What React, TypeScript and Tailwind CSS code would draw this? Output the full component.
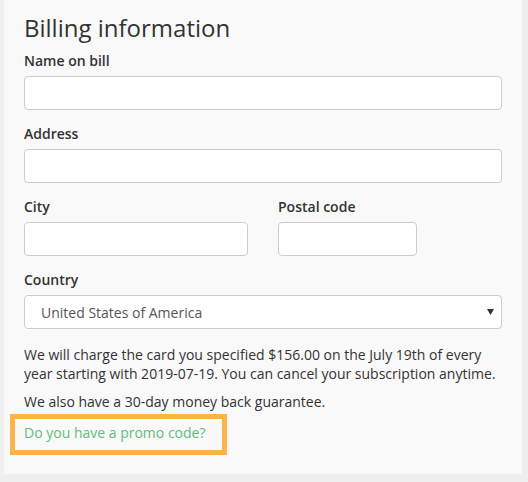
import React from "react";

const Field = ({ label, className = "" }: { label: string; className?: string }) => (
  <div className={`mb-[14px] ${className}`}>
    <label className="block mb-[5px] text-[14px] leading-[20px] font-semibold text-[#333]">
      {label}
    </label>
    <input
      type="text"
      className="block w-full h-[34px] bg-white border border-[#ccc] rounded-[4px] px-3 text-[14px] outline-none"
    />
  </div>
);

const App = () => {
  return (
    <div
      className="min-h-[482px] w-[528px] bg-[#efefef] pt-0"
      style={{ fontFamily: '"Open Sans", "Liberation Sans", sans-serif' }}
    >
      <div className="ml-[4px] w-[518px] h-[474px] bg-[#f9f9f9] px-[20px] pt-[15px] text-[#333]">
        <h3 className="text-[24px] leading-[26.4px] font-normal mb-[10px] text-[#333]">
          Billing information
        </h3>

        <Field label="Name on bill" />
        <Field label="Address" />

        <div className="flex gap-[30px]">
          <Field label="City" className="w-[224px]" />
          <Field label="Postal code" className="w-[139px]" />
        </div>

        {/* country select */}
        <div className="mb-[17px]">
          <label className="block mb-[5px] text-[14px] leading-[20px] font-semibold text-[#333]">
            Country
          </label>
          <div className="relative">
            <select
              defaultValue="us"
              className="block w-full h-[34px] appearance-none bg-white border border-[#ccc] rounded-[4px] pl-[16px] pr-8 text-[14px] text-[#555] outline-none"
            >
              <option value="us">United States of America</option>
            </select>
            <svg
              className="absolute right-[8px] top-[14px]"
              width="7"
              height="6"
              viewBox="0 0 7 6"
            >
              <path d="M0 0h7L3.5 6z" fill="#333" />
            </svg>
          </div>
        </div>

        <p className="text-[14px] leading-[18.5px] mb-[10px]">
          We will charge the card you specified $156.00 on the July 19th of every year
          starting with 2019-07-19. You can cancel your subscription anytime.
        </p>
        <p className="text-[14px] leading-[18.5px] mb-[2px]">
          We also have a 30-day money back guarantee.
        </p>

        <div className="-ml-[14px] w-[217px] h-[41px] border-[5px] border-[#fbb34a] pl-[9px] pt-[1px]">
          <a href="#" className="text-[14px] leading-[20px] text-[#62bd78]">
            Do you have a promo code?
          </a>
        </div>
      </div>
    </div>
  );
};

export default App;
